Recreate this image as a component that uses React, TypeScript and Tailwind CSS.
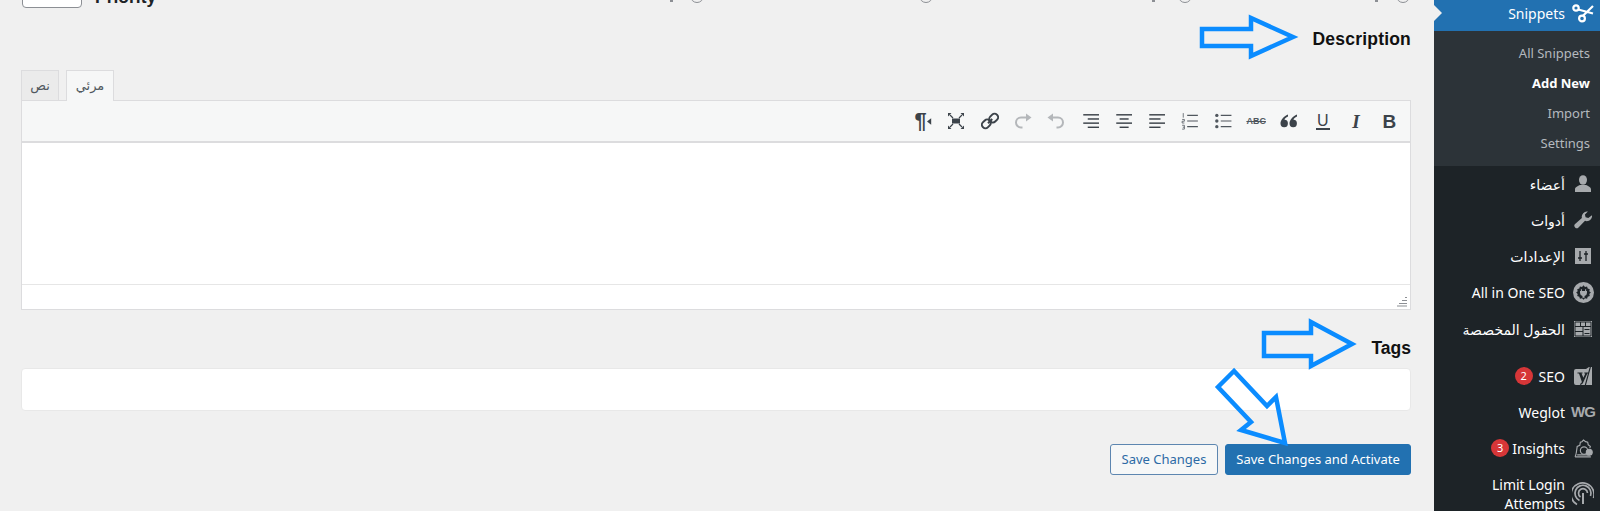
import React from "react";

const ic = "w-[18px] h-[18px]";
const dark = "#3c434a";
const grey = "#a7aaad";

function Lines({ rows }: { rows: [number, number][] }) {
  return (
    <svg viewBox="0 0 16 16" className={ic} fill="none" stroke={dark} strokeWidth="1.3">
      {rows.map(([a, b], i) => (
        <path key={i} d={`M${a} ${2.5 + i * 3.7}H${b}`} />
      ))}
    </svg>
  );
}

const toolbar: React.ReactNode[] = [
  <span key="p" className="flex items-center text-[#3c434a] font-bold text-[22px] leading-none font-['Liberation_Sans',sans-serif]">
    ¶
    <svg viewBox="0 0 6 8" className="w-[5px] h-[7px]"><path d="M5 0v8L0 4z" fill={dark} /></svg>
  </span>,
  <svg key="f" viewBox="0 0 18 18" className={ic} fill={dark}>
    <path d="M5 6.500h8v5H5z" />
    <path d="M3 3l3 3M15 3l-3 3M3 15l3-3M15 15l-3-3" stroke={dark} strokeWidth="1.2" />
    <path d="M1 1h3.500L1 4.500zM17 1v3.500L13.500 1zM1 17v-3.500L4.500 17zM17 17h-3.500l3.500-3.500z" />
  </svg>,
  <svg key="l" viewBox="0 0 18 18" className={ic} fill="none" stroke={dark} strokeWidth="2">
    <path d="M7 11.200 11.200 7" />
    <rect x="9.200" y="1.400" width="7" height="9.400" rx="3.300" transform="rotate(45 12.700 6.100)" />
    <rect x="1.800" y="7.200" width="7" height="9.400" rx="3.300" transform="rotate(45 5.300 11.900)" />
  </svg>,
  <svg key="r" viewBox="0 0 18 18" className={ic} fill="none" stroke="#b4b7ba" strokeWidth="2">
    <path d="M13 5.500H7a5 5 0 0 0 0 10h1.500" />
    <path d="M12 1.500v8l5.500-4z" fill="#b4b7ba" stroke="none" />
  </svg>,
  <svg key="u" viewBox="0 0 18 18" className={ic} fill="none" stroke="#b4b7ba" strokeWidth="2">
    <path d="M5 5.500h6a5 5 0 0 1 0 10H9.500" />
    <path d="M6 1.500v8L.5 5.500z" fill="#b4b7ba" stroke="none" />
  </svg>,
  <Lines key="ar" rows={[[2, 16], [6, 16], [2, 16], [6, 16]]} />,
  <Lines key="ac" rows={[[2, 16], [5, 13], [2, 16], [5, 13]]} />,
  <Lines key="al" rows={[[2, 16], [2, 12], [2, 16], [2, 12]]} />,
  <svg key="ol" viewBox="0 0 16 16" className={ic} fill="none" stroke="#50575e" strokeWidth="1">
    <path d="M5.500 3h9.500M5.500 8h9.500M5.500 13h9.500" />
    <path d="M2 1v4M1 6.600h2v1.600H1v1.600h2M1 11.800h2v3.400H1M1.600 13.500H3" strokeWidth=".7" />
  </svg>,
  <svg key="ul" viewBox="0 0 16 16" className={ic} fill="#50575e">
    <circle cx="2.500" cy="3" r="1.500" /><circle cx="2.500" cy="8" r="1.500" /><circle cx="2.500" cy="13" r="1.500" />
    <path d="M6 2.500h9.500v1H6zM6 7.500h9.500v1H6zM6 12.500h9.500v1H6z" />
  </svg>,
  <span key="abc" className="text-[9px] font-bold leading-none text-[#50575e] line-through font-['Liberation_Sans',sans-serif]">ABC</span>,
  <svg key="q" viewBox="0 0 18 18" className={ic} fill={dark}>
    <path d="M8 2.500C3.500 4.500.5 8 .5 11.500a3.700 3.700 0 1 0 4-3.700c.3-1.100 1.500-2.300 3.500-3.200zM17 2.500C12.500 4.500 9.500 8 9.500 11.500a3.700 3.700 0 1 0 4-3.700c.3-1.100 1.500-2.300 3.500-3.200z" />
  </svg>,
  <span key="un" className="text-[16px] leading-[15px] border-b-2 border-[#3c434a] text-[#3c434a] px-[1px] font-['Liberation_Sans',sans-serif]">U</span>,
  <span key="it" className="text-[19px] font-bold italic leading-none text-[#3c434a] font-['Liberation_Serif',serif]">I</span>,
  <span key="b" className="text-[19px] font-bold leading-none text-[#3c434a] font-['Liberation_Sans',sans-serif]">B</span>,
];

function Arrow({ className, box, points }: { className: string; box: string; points: string }) {
  return (
    <svg viewBox={box} className={`absolute ${className}`} fill="none" stroke="#0b8cff" strokeWidth="4.5">
      <polygon points={points} />
    </svg>
  );
}

function MenuItem({
  label,
  icon,
  badge,
  badgeClass = "mr-[3px]",
  className = "h-[36px]",
}: {
  label: React.ReactNode;
  icon: React.ReactNode;
  badge?: string;
  badgeClass?: string;
  className?: string;
}) {
  return (
    <div className={`flex items-center justify-end text-white text-[14px] ${className}`}>
      {badge && (
        <span className={`w-[18px] h-[18px] rounded-full bg-[#d63638] text-[11px] flex items-center justify-center ${badgeClass}`}>{badge}</span>
      )}
      <span className="text-right leading-[19px]">{label}</span>
      <span className="w-[35px] flex justify-center shrink-0 pl-[1px]">{icon}</span>
    </div>
  );
}

const gearTeeth = "M10 3.200l1.400 1.500 2-.5.6 2 2 .6-.5 2L17 10l-1.500 1.400.5 2-2 .6-.6 2-2-.5L10 17l-1.400-1.500-2 .5-.6-2-2-.6.5-2L3 10l1.500-1.200-.5-2 2-.6.6-2 2 .5z";

export default function App() {
  const sub = "h-[30px] flex items-center justify-end pr-[10px] text-[13px]";
  const radio = "absolute top-[13px] w-[14px] h-[14px] rounded-full border border-[#8c8f94]";
  const tick = "absolute top-[24px] w-[3px] h-[2px] bg-[#8c8f94]";
  return (
    <div className="relative flex h-[511px] w-full overflow-hidden bg-[#f0f0f0] font-['Noto_Sans','DejaVu_Sans',sans-serif]">
      <main className="flex-1 pl-[21px] pr-[23px] min-w-0">
        {/* cut-off priority row */}
        <div className="relative flex items-start h-[32px] -mt-[24px]">
          <div className="w-[60px] h-[32px] bg-white border border-[#8c8f94] rounded-[4px] ml-[1px]" />
          <span className="ml-[13px] mt-[9px] font-bold text-[17.5px] leading-[24px] text-[#1d2327] font-['Liberation_Sans',sans-serif]">Priority</span>
          <span className={`${tick} left-[649px]`} />
          <span className={`${radio} left-[669px]`} />
          <span className={`${radio} left-[898px]`} />
          <span className={`${tick} left-[1131px]`} />
          <span className={`${radio} left-[1157px]`} />
          <span className={`${tick} left-[1354px]`} />
          <span className={`${radio} left-[1375px]`} />
        </div>

        <h2 className="mt-[19px] h-[24px] text-right font-bold text-[17.5px] tracking-[0.2px] leading-[24px] text-[#111] font-['Liberation_Sans',sans-serif]">Description</h2>

        <div className="mt-[19px] h-[30px] flex items-end text-[13px] text-[#50575e]" dir="ltr">
          <div className="w-[38px] h-[30px] bg-[#ebebeb] border border-b-0 border-[#dcdcde] flex items-center justify-center">نص</div>
          <div className="ml-[7px] w-[48px] h-[31px] -mb-px relative bg-[#f6f7f7] border border-b-0 border-[#dcdcde] flex items-center justify-center">مرئي</div>
        </div>

        <section className="border border-[#dcdcde] h-[210px] flex flex-col bg-white">
          <div className="h-[42px] bg-[#f6f7f7] border-b-2 border-[#dcdcde] flex items-center justify-end pr-[4px]">
            {toolbar.map((t, i) => (
              <span key={i} className="w-[33.3px] h-[28px] flex items-center justify-center">{t}</span>
            ))}
          </div>
          <div className="flex-1" />
          <div className="h-[25px] border-t border-[#e6e6e6] flex items-end justify-end">
            <svg viewBox="0 0 12 12" className="w-[12px] h-[12px] mb-[2px] mr-[2px]" fill="#8c8f94">
              <path d="M9 2h2v1H9zM6 5h5v1H6zM3 8h8v1H3zM1 10.500h10v1H1z" />
            </svg>
          </div>
        </section>

        <h2 className="mt-[26px] h-[24px] text-right font-bold text-[17.5px] leading-[24px] text-[#111] font-['Liberation_Sans',sans-serif]">Tags</h2>

        <div className="mt-[8px] h-[43px] bg-white rounded-[4px] border border-[#e8e8e8]" />

        <div className="mt-[33px] flex justify-end gap-[7px] text-[13px]">
          <button className="w-[108px] h-[31px] rounded-[3px] border border-[#5d86b0] bg-[#f6f7f7] text-[#2c6aa5]">Save Changes</button>
          <button className="w-[186px] h-[31px] rounded-[3px] border border-[#2271b1] bg-[#2271b1] text-white">Save Changes and Activate</button>
        </div>
      </main>

      <aside className="w-[166px] shrink-0 bg-[#1d2327]">
        <div className="h-[31px] pb-[5px] bg-[#2271b1] flex items-center justify-end text-white text-[14px]">
          <span>Snippets</span>
          <span className="w-[35px] flex justify-center">
            <svg viewBox="0 0 24 20" className="w-[24px] h-[20px]" fill="none" stroke="#fff" strokeWidth="2.200">
              <circle cx="5" cy="5" r="2.700" />
              <circle cx="11" cy="15.500" r="2.900" />
              <path d="M7.300 6.500 22 10.500M12 12.800 22 3" />
            </svg>
          </span>
        </div>
        <div className="bg-[#2c3338] pt-[8px] pb-[7px]">
          <div className={`${sub} text-[#b4b9be]`}>All Snippets</div>
          <div className={`${sub} text-white font-bold text-[13.5px]`}>Add New</div>
          <div className={`${sub} text-[#b4b9be]`}>Import</div>
          <div className={`${sub} text-[#b4b9be]`}>Settings</div>
        </div>
        <div>
          <MenuItem label="أعضاء" icon={
            <svg viewBox="0 0 20 20" className="w-[20px] h-[20px]" fill={grey}>
              <ellipse cx="10" cy="6" rx="4" ry="4.800" /><path d="M2 18v-2.500c0-2.600 3-3.500 5-4.500h6c2 1 5 1.900 5 4.500V18z" />
            </svg>} />
          <MenuItem label="أدوات" icon={
            <svg viewBox="0 0 20 20" className="w-[20px] h-[20px]" fill={grey}>
              <path d="M19 5.200a5.200 5.200 0 0 1-7 5.600L5.500 17.500a2.400 2.400 0 0 1-3.400-3.400l6.800-6.200a5.200 5.200 0 0 1 6-6.300l-3 3 .7 2.700 2.700.7z" />
            </svg>} />
          <MenuItem label="الإعدادات" icon={
            <svg viewBox="0 0 16 16" className="w-[16px] h-[16px]">
              <rect width="16" height="16" fill={grey} />
              <path d="M5 3v10M11 3v10M3 10h4M9 6h4" stroke="#1d2327" strokeWidth="1.300" />
            </svg>} />
          <MenuItem label="All in One SEO" icon={
            <svg viewBox="0 0 20 20" className="w-[21px] h-[21px]">
              <circle cx="10" cy="10" r="10" fill={grey} />
              <path d={gearTeeth} fill="#1d2327" />
              <path d="M7.500 7h1v1.500h3V7h1v1.500h.8v2a3 3 0 0 1-2.300 2.800V15H9v-1.700a3 3 0 0 1-2.300-2.800v-2h.8z" fill={grey} />
            </svg>} />
          <MenuItem label="الحقول المخصصة" className="h-[38px]" icon={
            <svg viewBox="0 0 18 16" className="w-[18px] h-[16px]">
              <rect width="18" height="16" fill={grey} />
              <path d="M1 5.500h16M1 1h16v14H1zM6.500 1v4.500M11.500 1v4.500M9 5.500V15M1 10.500h8M10.500 8.500h5M10.500 12.500h5" stroke="#1d2327" strokeWidth="1" fill="none" />
            </svg>} />
          <MenuItem label="SEO" badge="2" badgeClass="mr-[6px]" className="h-[36px] mt-[10px]" icon={
            <svg viewBox="0 0 20 20" className="w-[20px] h-[20px]">
              <path fill={grey} d="M1 5a2 2 0 0 1 2-2h10l3-2h3v18H3a2 2 0 0 1-2-2z" />
              <path fill="#1d2327" d="M4.500 6.500h5v1H8.500l1.900 4.300 1.900-4.300h-1v-1h4v1h-1l-4 8.800c-.6 1.300-1.500 2.200-3 2.700l-.4-1c1-.4 1.600-1 2-1.900L6 7.500H4.500zM17 0h1.200l-5.500 20h-1.200z" />
            </svg>} />
          <MenuItem label="Weglot" icon={<span className="text-[#a7aaad] font-bold text-[15px] tracking-[-1px] font-['Liberation_Sans',sans-serif]">WG</span>} />
          <MenuItem label="Insights" badge="3" icon={
            <svg viewBox="0 0 20 20" className="w-[21px] h-[21px]" fill="none" stroke={grey} strokeWidth="1.100">
              <path d="M3 15 4 8l2.500-1L7 4l1.500-.5L10 2l2 1.500 2 .5.500 2.500 2 1.500-.5 1.500" />
              <circle cx="10.500" cy="12" r="3.500" /><circle cx="15.500" cy="13.500" r="2.800" fill={grey} />
              <path d="M2 18h15M3 15l-1 3M4 16h12" />
            </svg>} />
          <MenuItem label={<>Limit Login<br />Attempts</>} className="h-[40px] mt-[8px]" icon={
            <svg viewBox="0 0 22 30" className="w-[22px] h-[30px]" fill="none" stroke={grey} strokeWidth="1.700">
              <path d="M5 25.500A11.500 11.500 0 1 1 21.500 19" />
              <path d="M7.500 21.500A8 8 0 1 1 18.500 17" />
              <path d="M8.500 18A4.500 4.500 0 1 1 15.500 14" />
              <path d="M11 14v11" strokeWidth="2" />
            </svg>} />
        </div>
      </aside>

      {/* active-menu pointer */}
      <div className="absolute left-[1434px] top-[5px] w-0 h-0 border-y-[8px] border-y-transparent border-l-[8px] border-l-[#f0f0f0]" />

      {/* annotation arrows drawn over the page */}
      <Arrow className="left-[1190px] top-[5px] w-[115px] h-[65px]" box="1190 5 115 65" points="1202,29 1251,29 1251,18 1293,37 1251,56 1251,46 1202,46" />
      <Arrow className="left-[1255px] top-[310px] w-[110px] h-[70px]" box="1255 310 110 70" points="1264,333 1311,333 1311,322 1352,344 1311,366 1311,356 1264,356" />
      <Arrow className="left-[1205px] top-[360px] w-[90px] h-[95px]" box="1205 360 90 95" points="1234,371 1218,387 1251,422 1241,430 1285,443 1276,397 1267,406" />
    </div>
  );
}
